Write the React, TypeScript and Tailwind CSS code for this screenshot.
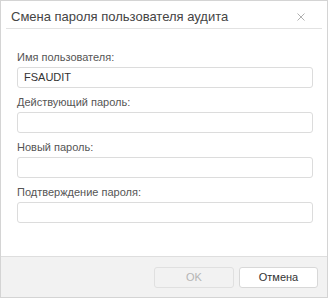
import React from 'react';

const fields = [
  { label: 'Имя пользователя:', value: 'FSAUDIT' },
  { label: 'Действующий пароль:', value: '' },
  { label: 'Новый пароль:', value: '' },
  { label: 'Подтверждение пароля:', value: '' },
];

const App = () => {
  return (
    <div className="w-[330px] h-[300px] bg-white font-['Liberation_Sans',Arial,sans-serif]">
      <div className="w-[328px] h-[298px] border border-[#d4d4d4] flex flex-col">
        {/* header */}
        <div className="h-[27px] flex items-center justify-between pl-[10px] pr-[22px]">
          <span className="text-[13px] text-[#444] leading-none mt-[3px]">Смена пароля пользователя аудита</span>
          <svg width="8" height="8" viewBox="0 0 8 8" className="mt-[4px]">
            <path d="M0.5 0.5 L7.5 7.5 M7.5 0.5 L0.5 7.5" stroke="#b0b0b0" strokeWidth="1" />
          </svg>
        </div>
        <div className="mx-[5px] h-px bg-[#e2e2e2]" />

        {/* form */}
        <div className="flex-1 pt-[21px] pl-[16px]">
          {fields.map((f, i) => (
            <div key={i} className={i > 0 ? 'mt-[7px]' : ''}>
              <div className="h-[15px] text-[11px] leading-[15px] text-[#555]">{f.label}</div>
              <div className="mt-[2px] w-[296px] h-[21px] border border-[#dcdcdc] rounded-[3px] bg-white flex items-center px-[6px] text-[11px] text-[#333]">
                {f.value}
              </div>
            </div>
          ))}
        </div>

        {/* footer */}
        <div className="h-[41px] bg-[#f2f2f2] border-t border-[#dedede] flex items-center justify-end gap-[5px] pr-[9px]">
          <button className="w-[80px] h-[21px] border border-[#e0e0e0] rounded-[3px] bg-[#f2f2f2] text-[11px] text-[#b5b5b5]">
            OK
          </button>
          <button className="w-[79px] h-[21px] border border-[#d8d8d8] rounded-[3px] bg-white text-[11px] text-[#333]">
            Отмена
          </button>
        </div>
      </div>
    </div>
  );
};

export default App;
